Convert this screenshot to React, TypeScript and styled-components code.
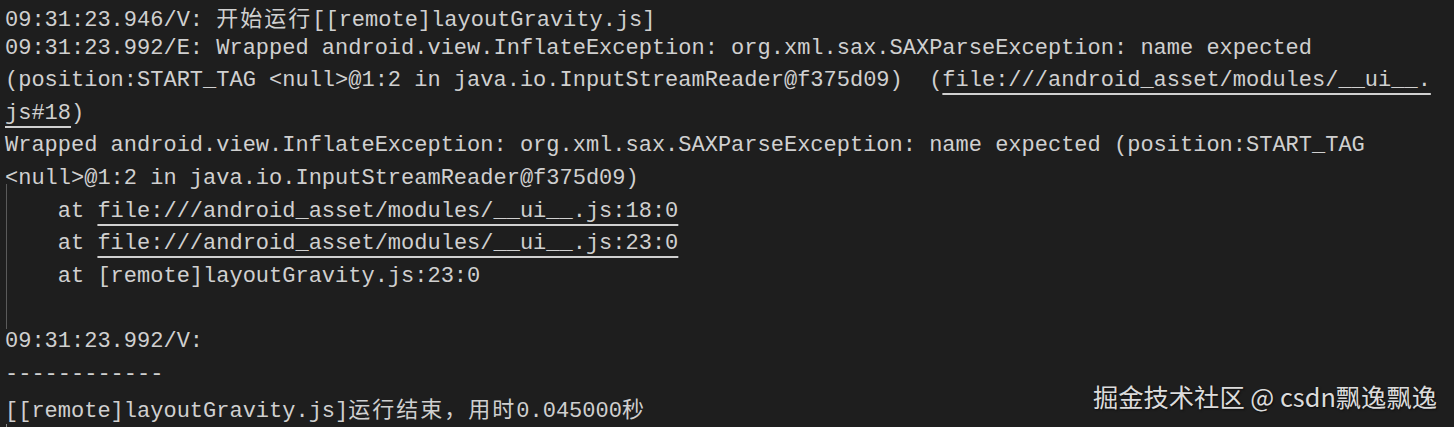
import React from "react";
import styled, { createGlobalStyle } from "styled-components";

const Global = createGlobalStyle`
  html, body {
    margin: 0;
    padding: 0;
    background: #1e1e1e;
  }
  #root {
    width: 1454px;
    height: 427px;
    overflow: hidden;
  }
`;

const Screen = styled.div`
  position: relative;
  width: 1454px;
  height: 427px;
  box-sizing: border-box;
  padding: 0 0 0 5px;
  background: #1e1e1e;
  color: #d0d0d0;
  font-family: "Liberation Mono", "DejaVu Sans Mono", "Noto Sans CJK SC", monospace;
  font-size: 22px;
  overflow: hidden;
`;

const Line = styled.div`
  height: 32.6px;
  line-height: 32.6px;
  white-space: pre;
`;

const Link = styled.span`
  text-decoration: underline;
  text-decoration-thickness: 2px;
  text-underline-offset: 7px;
  text-decoration-color: #d0d0d0;
`;

const Cjk = styled.span`
  font-family: "Noto Sans CJK SC", sans-serif;
  font-size: 22px;
  letter-spacing: 2px;
`;

const Guide = styled.div`
  margin-top: -12px;
  padding-top: 12px;
  margin-left: 1px;
  border-left: 1px solid #5a5a5a;
  margin-bottom: -3px;
  padding-bottom: 3px;
  & > div {
    margin-left: -2px;
  }
`;

const Caret = styled.div`
  margin-left: 1px;
  height: 10px;
  border-left: 1px solid #8a8a8a;
`;

const Watermark = styled.div`
  position: absolute;
  right: 17px;
  top: 382px;
  font-family: "Noto Sans CJK SC", "Noto Sans", sans-serif;
  font-size: 25.3px;
  line-height: 28px;
  color: #dcdcdc;
  text-shadow: 1px 1px 2px rgba(0, 0, 0, 0.6);
  white-space: nowrap;
`;

type Seg = { t: string; link?: boolean; cjk?: boolean };

const render = (segs: Seg[]) =>
  segs.map((s, i) =>
    s.link ? <Link key={i}>{s.t}</Link> : s.cjk ? <Cjk key={i}>{s.t}</Cjk> : <React.Fragment key={i}>{s.t}</React.Fragment>
  );

const top: Seg[][] = [
  [{ t: "09:31:23.946/V: " }, { t: "开始运行", cjk: true }, { t: "[[remote]layoutGravity.js]" }],
  [{ t: "09:31:23.992/E: Wrapped android.view.InflateException: org.xml.sax.SAXParseException: name expected" }],
  [
    { t: "(position:START_TAG <null>@1:2 in java.io.InputStreamReader@f375d09)  (" },
    { t: "file:///android_asset/modules/__ui__.", link: true },
  ],
  [{ t: "js#18", link: true }, { t: ")" }],
  [{ t: "Wrapped android.view.InflateException: org.xml.sax.SAXParseException: name expected (position:START_TAG" }],
  [{ t: "<null>@1:2 in java.io.InputStreamReader@f375d09)" }],
];

const stack: Seg[][] = [
  [{ t: "    at " }, { t: "file:///android_asset/modules/__ui__.js:18:0", link: true }],
  [{ t: "    at " }, { t: "file:///android_asset/modules/__ui__.js:23:0", link: true }],
  [{ t: "    at [remote]layoutGravity.js:23:0" }],
  [{ t: "" }],
];

const bottom: Seg[][] = [
  [{ t: "09:31:23.992/V: " }],
  [{ t: "------------" }],
  [
    { t: "[[remote]layoutGravity.js]" },
    { t: "运行结束，用时", cjk: true },
    { t: "0.045000" },
    { t: "秒", cjk: true },
  ],
];

export default function App() {
  return (
    <>
      <Global />
      <Screen>
        {top.map((l, i) => (
          <Line key={"t" + i}>{render(l)}</Line>
        ))}
        <Guide>
          {stack.map((l, i) => (
            <Line key={"s" + i}>{render(l)}</Line>
          ))}
        </Guide>
        {bottom.map((l, i) => (
          <Line key={"b" + i}>{render(l)}</Line>
        ))}
        <Caret />
        <Watermark>掘金技术社区 @ csdn飘逸飘逸</Watermark>
      </Screen>
    </>
  );
}
